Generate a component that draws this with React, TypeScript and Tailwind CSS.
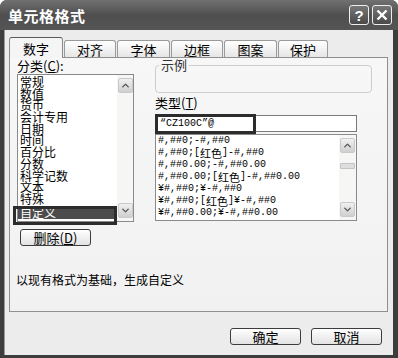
import { ChevronDown, ChevronUp } from "lucide-react";

const categories = [
  "常规",
  "数值",
  "货币",
  "会计专用",
  "日期",
  "时间",
  "百分比",
  "分数",
  "科学记数",
  "文本",
  "特殊",
  "自定义",
];

const formats: (string | { red: true })[][] = [
  ["#,##0;-#,##0"],
  ["#,##0;", { red: true }, "-#,##0"],
  ["#,##0.00;-#,##0.00"],
  ["#,##0.00;", { red: true }, "-#,##0.00"],
  ["¥#,##0;¥-#,##0"],
  ["¥#,##0;", { red: true }, "¥-#,##0"],
  ["¥#,##0.00;¥-#,##0.00"],
];

const tabs = [
  { label: "数字", w: "w-[54px]", active: true },
  { label: "对齐", w: "w-[52px]" },
  { label: "字体", w: "w-[53px]" },
  { label: "边框", w: "w-[52px]" },
  { label: "图案", w: "w-[53px]" },
  { label: "保护", w: "w-[50px]" },
];

// small XP style scrollbar arrow button
const ScrollBtn = ({ up }: { up?: boolean }) => (
  <div className="h-[15px] w-[15px] rounded-[2px] border border-[#c9c9c9] bg-gradient-to-b from-[#f0f0f0] to-[#cfcfcf] flex items-center justify-center">
    {up ? (
      <ChevronUp className="w-[11px] h-[11px] text-[#555]" strokeWidth={3} />
    ) : (
      <ChevronDown className="w-[11px] h-[11px] text-[#555]" strokeWidth={3} />
    )}
  </div>
);

const Button = ({ children, className }: { children: React.ReactNode; className?: string }) => (
  <div
    className={
      "h-[17px] w-[71px] rounded-[3px] border border-[#3c3c3c] bg-gradient-to-b from-white to-[#e2e2e2] flex items-center justify-center text-[13px] leading-none text-black " +
      (className ?? "")
    }
  >
    {children}
  </div>
);

const App = () => {
  return (
    <div className="w-[398px] h-[358px] bg-[#3d3d3d] rounded-t-[7px] flex flex-col overflow-hidden font-['Noto_Sans_CJK_SC','Noto_Sans',sans-serif] text-black">
      {/* title bar */}
      <div className="h-[30px] shrink-0 flex items-center pl-[8px] pr-[6px] bg-gradient-to-b from-[#717171] via-[#4f4f4f] to-[#555]">
        <span className="text-white font-bold text-[15px] leading-none tracking-[0.5px]">单元格格式</span>
        <div className="ml-auto flex gap-[3px]">
          <div className="w-[20px] h-[20px] rounded-[3px] border border-[#eee] bg-gradient-to-b from-[#777] to-[#4a4a4a] flex items-center justify-center text-white font-bold text-[15px] leading-none font-['Liberation_Sans',sans-serif]">
            ?
          </div>
          <div className="w-[20px] h-[20px] rounded-[3px] border border-[#eee] bg-gradient-to-b from-[#777] to-[#4a4a4a] flex items-center justify-center">
            <svg width="12" height="12" viewBox="0 0 12 12">
              <path d="M1.5 1.5 L10.5 10.5 M10.5 1.5 L1.5 10.5" stroke="white" strokeWidth="2.4" />
            </svg>
          </div>
        </div>
      </div>

      {/* body */}
      <div className="flex-1 ml-[4px] mr-[5px] mb-[3px] bg-[#ececec] border-l border-[#9a9a9a] flex flex-col pl-[4px] pt-[7px]">
        {/* tabs */}
        <div className="h-[20px] flex items-end gap-[1px]">
          {tabs.map((t) =>
            t.active ? (
              <div
                key={t.label}
                className={`${t.w} relative z-10 -mb-[1px] h-[21px] rounded-t-[3px] border border-b-0 border-[#8a8a8a] border-t-[#5a5a5a] bg-[#f5f5f5] flex items-center justify-center text-[13px] leading-none`}
              >
                {t.label}
              </div>
            ) : (
              <div
                key={t.label}
                className={`${t.w} h-[17px] rounded-t-[3px] border border-b-0 border-[#9a9a9a] bg-gradient-to-b from-white to-[#e6e6e6] flex items-center justify-center text-[13px] leading-none`}
              >
                {t.label}
              </div>
            )
          )}
        </div>

        {/* tab panel */}
        <div className="relative w-[379px] h-[255px] border border-[#8f8f8f] bg-gradient-to-b from-[#f7f7f7] to-[#f1f1f1] flex flex-col">
          <div className="flex pl-[7px]">
            {/* left column */}
            <div className="relative w-[117px] flex flex-col">
              <div className="h-[16px] text-[13px] leading-[16px]">
                分类(<u>C</u>):
              </div>
              <div className="h-[148px] border border-[#8a8a8a] bg-white flex">
                <div className="flex-1 pt-[1px] text-[12px]">
                  {categories.map((c) =>
                    c === "自定义" ? (
                      <div key={c} className="bg-[#4c4c4c] text-white pl-[2px] h-[13px] leading-[13px] mt-[1px]">
                        {c}
                      </div>
                    ) : (
                      <div key={c} className="pl-[2px] h-[11.7px] leading-[11.7px] whitespace-nowrap">
                        {c}
                      </div>
                    )
                  )}
                </div>
                <div className="w-[16px] bg-[#f6f6f4] flex flex-col justify-between items-center py-[3px]">
                  <ScrollBtn up />
                  <ScrollBtn />
                </div>
              </div>
              {/* highlight frame around 自定义 */}
              <div className="absolute left-[-4px] top-[148px] w-[104px] h-[19px] border-[3px] border-[#2c2c2c]" />
              <Button className="mt-[7px] ml-[3px] w-[70px]">
                删除(<u>D</u>)
              </Button>
            </div>

            {/* right column */}
            <div className="ml-[21px] w-[217px] flex flex-col">
              <div className="relative mt-[7px] h-[28px] rounded-[4px] border border-[#cdcdcd]">
                <span className="absolute left-[3px] top-[-8px] px-[2px] bg-[#f6f6f6] text-[13px] leading-[14px] text-[#333]">
                  示例
                </span>
              </div>
              <div className="mt-[2px] h-[16px] text-[13px] leading-[16px]">
                类型(<u>T</u>)
              </div>
              <div className="relative mt-[4px] w-[202px] h-[17px] border border-[#7a7a7a] bg-white flex items-center pl-[4px] font-['Liberation_Mono',monospace] text-[10px]">
                “CZ100C”@
                <div className="absolute left-[-1px] top-[-2px] w-[101px] h-[20px] border-[3px] border-[#2c2c2c]" />
              </div>
              <div className="mt-[2px] w-[202px] h-[87px] border border-[#8a8a8a] bg-white flex">
                <div className="flex-1 font-['Liberation_Mono','Noto_Sans_CJK_SC',monospace] text-[10px] pl-[2px]">
                  {formats.map((f, i) => (
                    <div key={i} className="h-[12px] flex items-center whitespace-nowrap leading-[12px]">
                      {f.map((p, j) =>
                        typeof p === "string" ? (
                          <span key={j}>{p}</span>
                        ) : (
                          <span key={j} className="flex items-center">
                            [<span className="font-['Noto_Sans_CJK_SC',sans-serif] text-[11px] leading-[12px]">红色</span>]
                          </span>
                        )
                      )}
                    </div>
                  ))}
                </div>
                <div className="w-[17px] bg-[#f6f6f4] flex flex-col items-center py-[3px]">
                  <ScrollBtn up />
                  <div className="mt-[10px] w-[15px] h-[6px] rounded-[1px] border border-[#c3c3c3] bg-[#dedede]" />
                  <div className="flex-1" />
                  <ScrollBtn />
                </div>
              </div>
            </div>
          </div>

          <div className="mt-[27px] pl-[6px] text-[12px] leading-[14px]">以现有格式为基础，生成自定义</div>
        </div>

        {/* dialog buttons */}
        <div className="mt-[16px] flex justify-end gap-[10px] pr-[11px]">
          <Button>确定</Button>
          <Button>取消</Button>
        </div>
      </div>
    </div>
  );
};

export default App;
